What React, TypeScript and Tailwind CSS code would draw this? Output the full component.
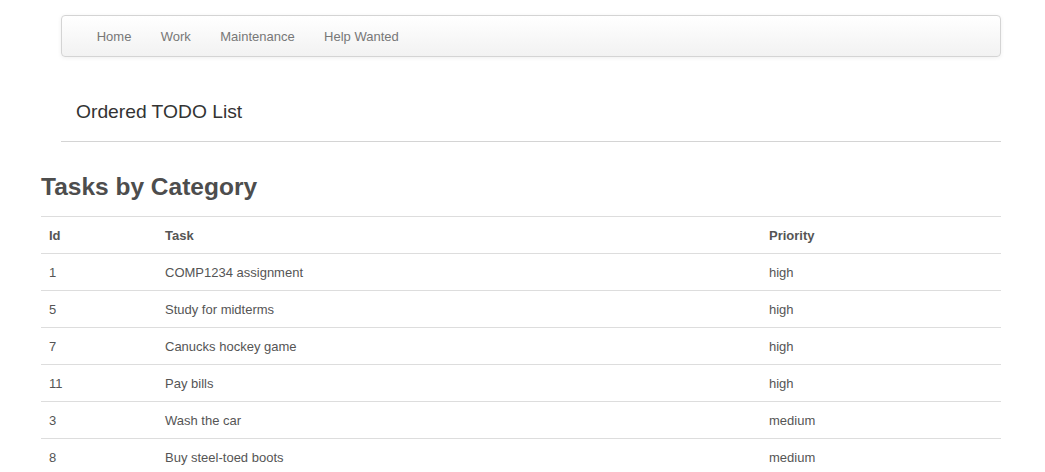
const navLinks = ['Home', 'Work', 'Maintenance', 'Help Wanted']

const tasks = [
  { id: 1, task: 'COMP1234 assignment', priority: 'high' },
  { id: 5, task: 'Study for midterms', priority: 'high' },
  { id: 7, task: 'Canucks hockey game', priority: 'high' },
  { id: 11, task: 'Pay bills', priority: 'high' },
  { id: 3, task: 'Wash the car', priority: 'medium' },
  { id: 8, task: 'Buy steel-toed boots', priority: 'medium' },
  { id: 2, task: 'Clean the garage', priority: 'medium' },
]

export default function App() {
  return (
    <div className="min-h-screen bg-white font-['Liberation_Sans',Arial,sans-serif] text-[13px] leading-5 text-[#555]">
      <div className="ml-[41px] w-[960px] pt-[15px]">
        {/* Navbar */}
        <div className="ml-5">
          <div className="flex h-[42px] items-center rounded border border-[#d4d4d4] bg-gradient-to-b from-white to-[#f2f2f2] px-5 shadow-[0_1px_4px_rgba(0,0,0,0.065)]">
            <ul className="flex pt-[2px]">
              {navLinks.map(l => (
                <li key={l}>
                  <a href="#" className="block px-[14.7px] py-[10px] text-[#777] hover:text-[#333]">
                    {l}
                  </a>
                </li>
              ))}
            </ul>
          </div>

          <div className="mt-[43px] pl-[15px] text-[19.25px] leading-6 text-[#333]">Ordered TODO List</div>
          <hr className="mt-[17px] border-0 border-t border-[#d4d4d4]" />
        </div>

        <h3 className="mt-[25px] text-[24.5px] font-bold leading-10 text-[#4d4d4d]">Tasks by Category</h3>

        <table className="mt-[9px] w-full table-fixed border-collapse">
          <colgroup>
            <col className="w-[116px]" />
            <col className="w-[604px]" />
            <col className="w-[240px]" />
          </colgroup>
          <thead>
            <tr className="border-t border-[#ddd]">
              <th className="px-2 pt-[9px] pb-[7px] text-left font-bold">Id</th>
              <th className="px-2 pt-[9px] pb-[7px] text-left font-bold">Task</th>
              <th className="px-2 pt-[9px] pb-[7px] text-left font-bold">Priority</th>
            </tr>
          </thead>
          <tbody>
            {tasks.map(t => (
              <tr key={t.id} className="border-t border-[#ddd]">
                <td className="px-2 pt-[9px] pb-[7px]">{t.id}</td>
                <td className="px-2 pt-[9px] pb-[7px]">{t.task}</td>
                <td className="px-2 pt-[9px] pb-[7px]">{t.priority}</td>
              </tr>
            ))}
          </tbody>
        </table>
      </div>
    </div>
  )
}
